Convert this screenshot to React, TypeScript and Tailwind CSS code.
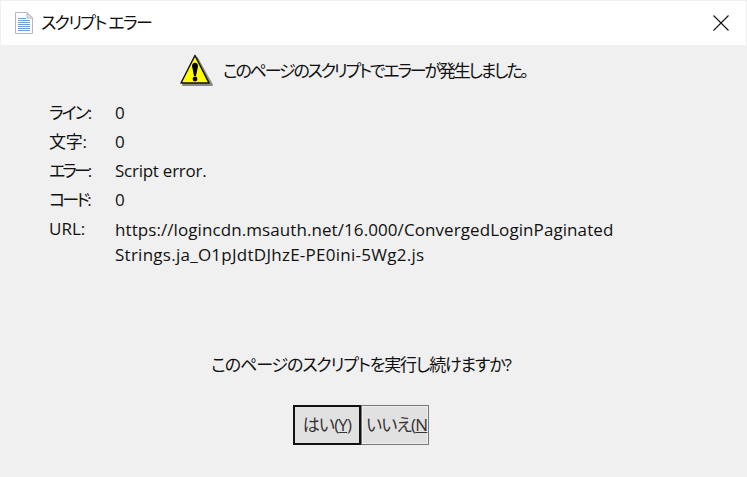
import React from 'react';

const rows = [
  { label: 'ライン:', value: '0', spacing: 'tracking-[-2px]' },
  { label: '文字:', value: '0', spacing: 'tracking-[-0.3px]' },
  { label: 'エラー:', value: 'Script error.', spacing: 'tracking-[-3px]' },
  { label: 'コード:', value: '0', spacing: 'tracking-[-2.7px]' },
];

const palt = "[font-feature-settings:'palt']";

const DocIcon = () => (
  <svg width="20" height="24" viewBox="0 0 20 24">
    <path d="M1.5 1.5H13L18.5 7V22.5H1.5Z" fill="#fbfcfe" stroke="#b4b8bd" />
    <path d="M13 1.5V7H18.5Z" fill="#dfe3e8" stroke="#b4b8bd" strokeLinejoin="round" />
    <path d="M4 7.5H12M4 9.5H16M4 11.5H16M4 13.5H16M4 15.5H16M4 17.5H16M4 19.5H16" stroke="#6f9fd8" strokeWidth="1" />
  </svg>
);

const WarnIcon = () => (
  <svg width="34" height="34" viewBox="0 0 34 34" className="shrink-0">
    <path d="M17 4L32 31H3Z" fill="#8a8a8a" stroke="#8a8a8a" strokeWidth="2" strokeLinejoin="round" />
    <path d="M15 1.5L29 29H1Z" fill="#ffff00" stroke="#111" strokeWidth="1.5" strokeLinejoin="round" />
    <path d="M12 12C12 7.5 18 7.5 18 12L16 22H14Z" fill="#000" />
    <circle cx="15" cy="25" r="2.4" fill="#000" />
  </svg>
);

export default function App() {
  return (
    <div className="w-[747px] h-[477px] flex flex-col bg-[#f0f0f0] text-[#111] text-[17px] leading-[24px] font-['Open_Sans','Noto_Sans_CJK_JP',sans-serif]">
      {/* Title bar */}
      <div className="h-[44px] mx-px mt-px bg-white flex items-center justify-between shrink-0">
        <div className="flex items-center gap-[7px] pl-[13px]">
          <DocIcon />
          <span className={`${palt} tracking-[-1.7px]`}>スクリプト エラー</span>
        </div>
        <button className="w-[46px] h-[44px] flex items-center justify-center mr-[2px]">
          <svg width="16" height="16" viewBox="0 0 16 16">
            <path d="M0.5 0.5L15.5 15.5M15.5 0.5L0.5 15.5" stroke="#111" strokeWidth="1.1" />
          </svg>
        </button>
      </div>

      {/* Message */}
      <div className="flex items-center gap-[9px] mt-[8px] h-[36px] pl-[180px]">
        <WarnIcon />
        <span className={`${palt} tracking-[-2.2px]`}>このページのスクリプトでエラーが発生しました。</span>
      </div>

      {/* Details */}
      <div className="flex flex-col gap-[5px] mt-[12px] pl-[49px]">
        {rows.map((r) => (
          <div key={r.label} className="flex">
            <span className={`w-[66px] shrink-0 whitespace-nowrap ${palt} ${r.spacing}`}>{r.label}</span>
            <span className="tracking-[-0.25px]">{r.value}</span>
          </div>
        ))}
        <div className="flex">
          <span className="w-[66px] shrink-0">URL:</span>
          <div className="leading-[25px]">
            <div className="tracking-[0.08px]">https://logincdn.msauth.net/16.000/ConvergedLoginPaginated</div>
            <div className="tracking-[0.26px]">Strings.ja_O1pJdtDJhzE-PE0ini-5Wg2.js</div>
          </div>
        </div>
      </div>

      {/* Question */}
      <div className={`text-center mt-[86px] pr-[25px] ${palt} tracking-[-1.15px]`}>このページのスクリプトを実行し続けますか?</div>

      {/* Buttons */}
      <div className="flex justify-center mt-[28px] pr-[25px]">
        <button className={`w-[68px] h-[40px] bg-[#e1e1e1] border-2 border-[#111] flex items-center justify-center text-[#333] tracking-[-0.8px] ${palt}`}>
          <span>はい(<u>Y</u>)</span>
        </button>
        <button className={`w-[68px] h-[40px] bg-[#e1e1e1] border border-[#777] shadow-[inset_0_0_0_1px_#f0f0f0] overflow-hidden flex items-center justify-start pl-[4px] text-[#333] whitespace-nowrap tracking-[-0.8px] ${palt}`}>
          <span>いいえ(<u>N</u></span>
        </button>
      </div>
    </div>
  );
}
